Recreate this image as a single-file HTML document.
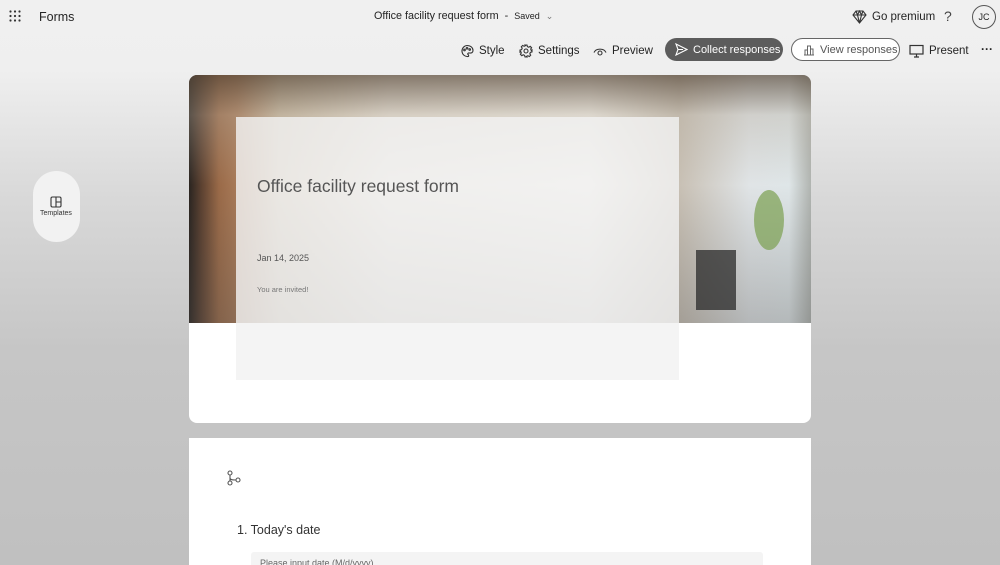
<!DOCTYPE html>
<html style="overflow:hidden;width:1000px;height:565px"><head><meta charset="utf-8"><style>
*{margin:0;padding:0;box-sizing:border-box}
body{width:1000px;height:565px;overflow:hidden;font-family:"Liberation Sans",sans-serif;color:#242424;position:relative;
background:linear-gradient(180deg,#f0f0f0 0px,#efefef 70px,#d8d8d8 200px,#c6c6c6 350px,#c0c0c0 565px);}
.a{position:absolute;white-space:nowrap}
.btn{font-size:11.5px;display:flex;align-items:center;gap:5px}
svg{display:block}
</style></head><body>
<div class="a" style="left:9px;top:10px"><svg width="12" height="12" viewBox="0 0 12 12" fill="#333"><circle cx="1.5" cy="1.5" r="1.1"/><circle cx="6" cy="1.5" r="1.1"/><circle cx="10.5" cy="1.5" r="1.1"/><circle cx="1.5" cy="6" r="1.1"/><circle cx="6" cy="6" r="1.1"/><circle cx="10.5" cy="6" r="1.1"/><circle cx="1.5" cy="10.5" r="1.1"/><circle cx="6" cy="10.5" r="1.1"/><circle cx="10.5" cy="10.5" r="1.1"/></svg></div>
<div class="a" style="left:39px;top:10px;font-size:12.5px">Forms</div>
<div class="a" style="left:374px;top:10px;font-size:10.8px">Office facility request form &nbsp;- &nbsp;<span style="font-size:9px">Saved</span> &nbsp;<span style="color:#777;font-size:9px">&#8964;</span></div>
<div class="a btn" style="left:852px;top:10px"><svg width="15" height="14" viewBox="0 0 15 14" fill="none" stroke="#333" stroke-width="1.1"><path d="M4 1h7l3 4-6.5 8L1 5z M1 5h13 M5.5 5l2 8 2-8 M4 1l1.5 4 2-4 2 4 1.5-4"/></svg>Go premium</div>
<div class="a" style="left:944px;top:8px;font-size:14px;color:#444">?</div>
<div class="a" style="left:972px;top:5px;width:24px;height:24px;border:1px solid #555;border-radius:50%;font-size:9px;text-align:center;line-height:22px">JC</div>

<div class="a btn" style="left:460px;top:44px"><svg width="14" height="14" viewBox="0 0 14 14" fill="none" stroke="#333" stroke-width="1.1"><path d="M7 1.5a5.5 5.5 0 1 0 1 11c1 0 .8-1.5 0-2s0-1.8 1.5-1.5c2 .3 3.5-.5 3.5-2.5 0-3-2.5-5-6-5z"/><circle cx="4.5" cy="6" r=".8"/><circle cx="7" cy="4.3" r=".8"/><circle cx="9.7" cy="5.5" r=".8"/></svg>Style</div>
<div class="a btn" style="left:519px;top:44px"><svg width="14" height="14" viewBox="0 0 14 14" fill="none" stroke="#333" stroke-width="1.1"><circle cx="7" cy="7" r="2"/><path d="M6 1h2l.4 1.6 1.4.6 1.4-.9 1.4 1.4-.9 1.4.6 1.4L13 6v2l-1.6.4-.6 1.4.9 1.4-1.4 1.4-1.4-.9-1.4.6L8 13H6l-.4-1.6-1.4-.6-1.4.9-1.4-1.4.9-1.4-.6-1.4L1 8V6l1.6-.4.6-1.4-.9-1.4 1.4-1.4 1.4.9 1.4-.6z"/></svg>Settings</div>
<div class="a btn" style="left:593px;top:44px"><svg width="14" height="14" viewBox="0 0 14 14" fill="none" stroke="#333" stroke-width="1.1"><path d="M1 8.5C3 4 11 4 13 8.5"/><circle cx="7" cy="9" r="2"/></svg>Preview</div>
<div class="a btn" style="left:665px;top:38px;width:118px;height:23px;border-radius:12px;background:#5c5c5c;color:#fff;padding-left:10px;font-size:11px"><svg width="13" height="13" viewBox="0 0 13 13" fill="none" stroke="#fff" stroke-width="1.1"><path d="M1 1l11 5.5L1 12l2-5.5z M3 6.5h5"/></svg>Collect responses</div>
<div class="a btn" style="left:791px;top:38px;width:109px;height:23px;border-radius:12px;background:#fff;border:1px solid #666;color:#555;padding-left:11px;font-size:11px"><svg width="12" height="12" viewBox="0 0 12 12" fill="none" stroke="#666" stroke-width="1"><path d="M1 11h10 M2 11V6h2.5v5 M4.5 11V2h3v9 M7.5 11V5H10v6"/></svg>View responses</div>
<div class="a btn" style="left:909px;top:44px"><svg width="15" height="14" viewBox="0 0 15 14" fill="none" stroke="#333" stroke-width="1.2"><rect x="1" y="1.5" width="13" height="8.5"/><path d="M7.5 10v3 M5 13h5"/></svg>Present</div>
<div class="a" style="left:981px;top:42px;font-size:12px;font-weight:bold">···</div>

<div class="a" style="left:33px;top:171px;width:47px;height:71px;border-radius:24px;background:#f2f2f2"></div>
<div class="a" style="left:50px;top:196px"><svg width="12" height="12" viewBox="0 0 12 12" fill="none" stroke="#333" stroke-width="1.1"><rect x="1" y="1" width="10" height="10" rx="1.5"/><path d="M6 1v10 M6 6h5"/></svg></div>
<div class="a" style="left:40px;top:210px;font-size:7px;color:#333">Templates</div>

<div class="a" style="left:189px;top:75px;width:622px;height:348px;background:#fff;border-radius:8px;overflow:hidden">
 <div style="position:absolute;left:0;top:0;width:622px;height:248px;background:
 linear-gradient(180deg,rgba(90,75,60,.7) 0,rgba(180,170,155,.35) 40px,rgba(255,255,255,0) 110px,rgba(80,80,80,.3) 248px),
 linear-gradient(90deg,#2a2420 0,#5a4030 12px,#9a6a48 30px,#a87a58 48px,#c8b8a0 90px,#e8e2d8 200px,#f2efe8 400px,#c8c0b4 490px,#e0e4e6 560px,#dfe6e8 600px,#b0b4b0 622px);"></div>
 <div style="position:absolute;left:507px;top:175px;width:40px;height:60px;background:#2a2a2a;opacity:.75"></div>
 <div style="position:absolute;left:565px;top:115px;width:30px;height:60px;border-radius:50%;background:#7aa050;opacity:.7"></div>
 <div style="position:absolute;left:47px;top:42px;width:443px;height:263px;background:rgba(242,242,242,.82)"></div>
 <div style="position:absolute;left:68px;top:101px;font-size:17.5px;color:#555">Office facility request form</div>
 <div style="position:absolute;left:68px;top:178px;font-size:9px;color:#555">Jan 14, 2025</div>
 <div style="position:absolute;left:68px;top:210px;font-size:7.5px;color:#777">You are invited!</div>
</div>

<div class="a" style="left:189px;top:438px;width:622px;height:127px;background:#fff;overflow:hidden">
 <div style="position:absolute;left:38px;top:32px"><svg width="14" height="16" viewBox="0 0 14 16" fill="none" stroke="#555" stroke-width="1.1"><circle cx="3" cy="3" r="2"/><circle cx="3" cy="13" r="2"/><circle cx="11" cy="10" r="2"/><path d="M3 5v6 M3 8c0 2 3 2 6 2"/></svg></div>
 <div style="position:absolute;left:48px;top:85px;font-size:12.5px;color:#333">1. Today's date</div>
 <div style="position:absolute;left:62px;top:114px;width:512px;height:30px;background:#f4f4f4;border-radius:3px;font-size:9px;color:#666;padding:6px 9px">Please input date (M/d/yyyy)</div>
</div>
</body></html>
